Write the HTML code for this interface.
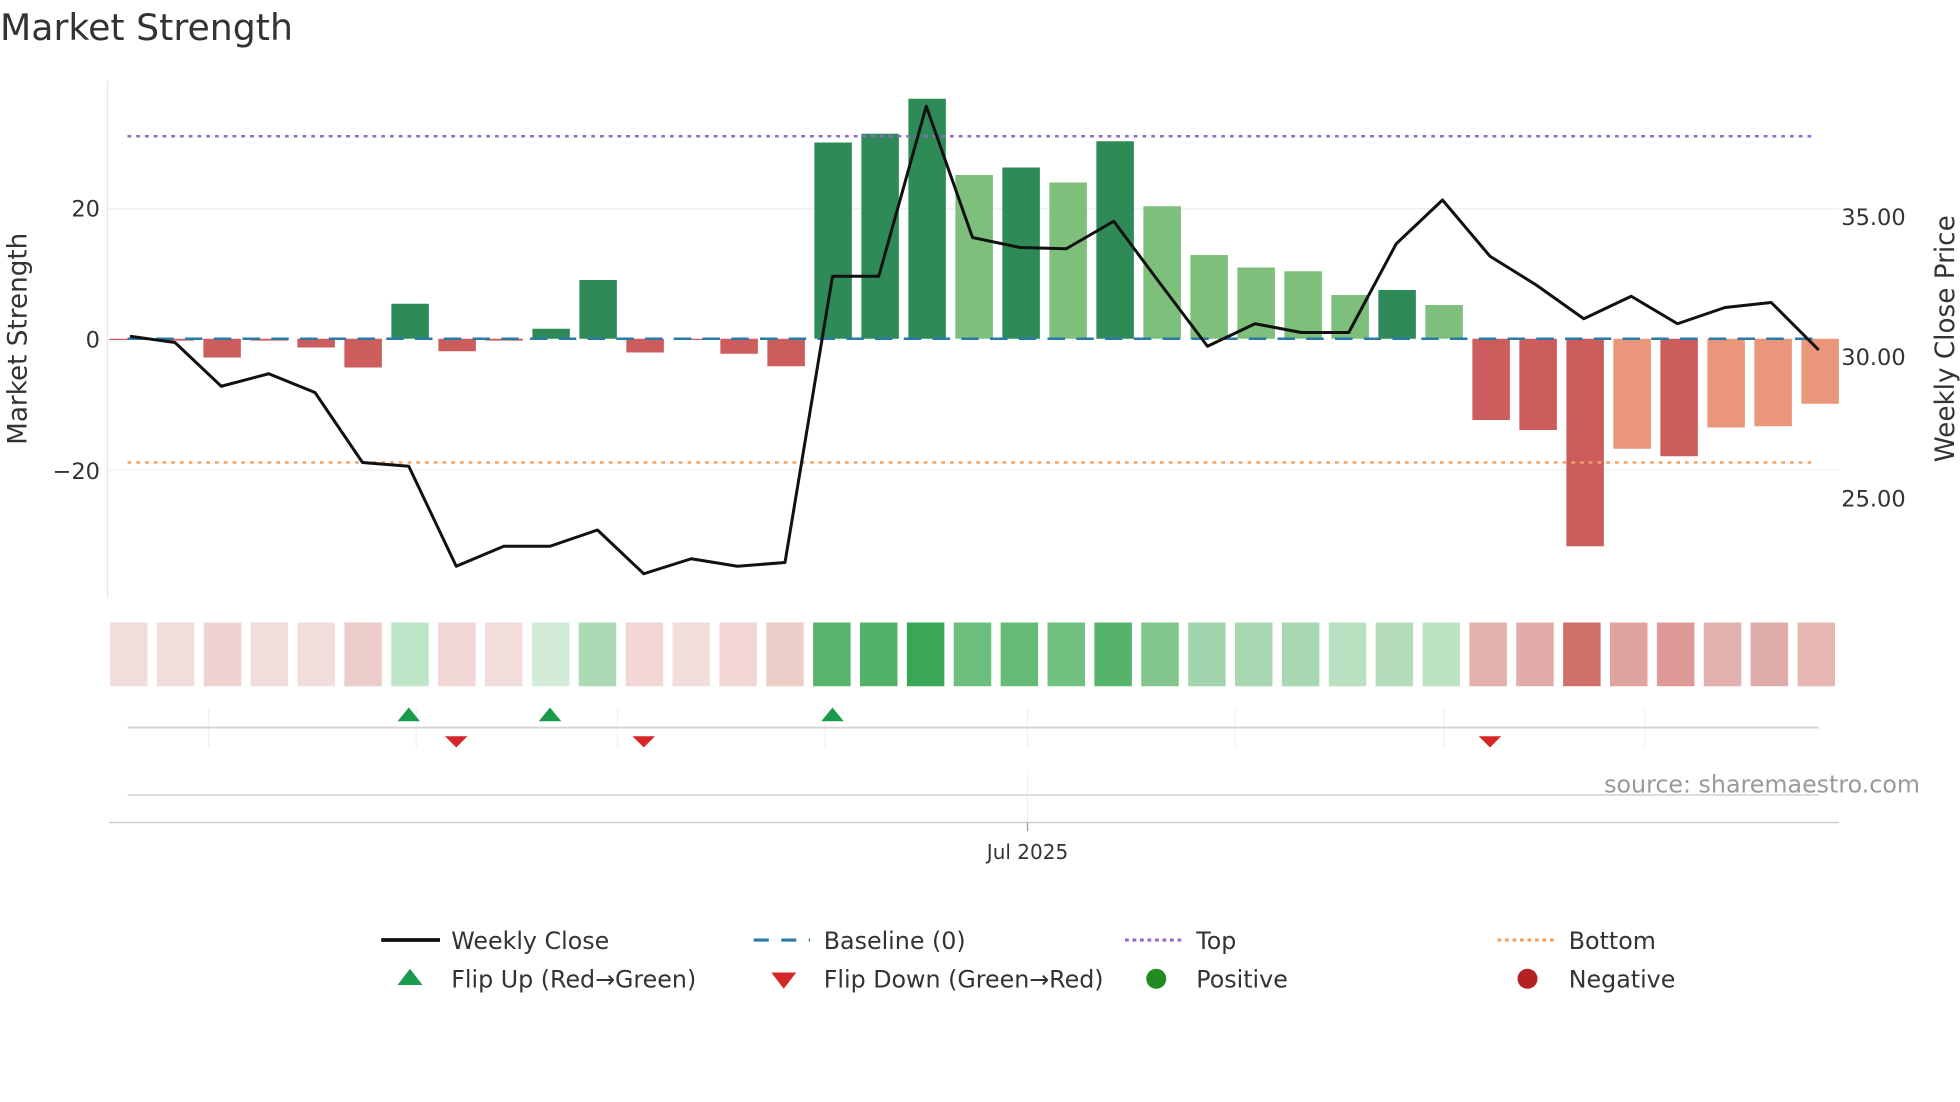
<!DOCTYPE html>
<html><head><meta charset="utf-8"><style>
html,body{margin:0;padding:0;background:#fff;}
svg{display:block;font-family:"DejaVu Sans","Liberation Sans",sans-serif;}
</style></head><body>
<svg width="1960" height="1102" viewBox="0 0 1568 881.6" xmlns="http://www.w3.org/2000/svg">
<rect width="1568" height="882" fill="#fff"/>
<text x="0" y="32" font-size="29" fill="#333">Market Strength</text>
<g stroke="#eceff2" stroke-width="1">
<line x1="86" y1="167" x2="1471" y2="167"/>
<line x1="86" y1="376" x2="1471" y2="376"/>
</g>
<line x1="86" y1="65" x2="86" y2="478" stroke="#e6e6e6"/>
<g font-size="18" fill="#333" text-anchor="end">
<text x="80" y="173">20</text><text x="80" y="278">0</text><text x="80" y="383">−20</text>
</g>
<g font-size="18" fill="#333">
<text x="1473" y="180">35.00</text><text x="1473" y="292">30.00</text><text x="1473" y="405">25.00</text>
</g>
<text transform="translate(21,271) rotate(-90)" font-size="21" fill="#333" text-anchor="middle">Market Strength</text>
<text transform="translate(1563,271) rotate(-90)" font-size="21" fill="#333" text-anchor="middle">Weekly Close Price</text>
<g>
<rect x="87.5" y="271" width="30" height="1" fill="#cd5c5c"/>
<rect x="125.1" y="271" width="30" height="1.5" fill="#cd5c5c"/>
<rect x="162.7" y="271" width="30" height="15" fill="#cd5c5c"/>
<rect x="200.3" y="271" width="30" height="1.5" fill="#cd5c5c"/>
<rect x="237.9" y="271" width="30" height="7" fill="#cd5c5c"/>
<rect x="275.5" y="271" width="30" height="23" fill="#cd5c5c"/>
<rect x="313.1" y="243" width="30" height="28" fill="#2e8b57"/>
<rect x="350.7" y="271" width="30" height="10" fill="#cd5c5c"/>
<rect x="388.3" y="271" width="30" height="1.5" fill="#cd5c5c"/>
<rect x="425.9" y="263" width="30" height="8" fill="#2e8b57"/>
<rect x="463.5" y="224" width="30" height="47" fill="#2e8b57"/>
<rect x="501.1" y="271" width="30" height="11" fill="#cd5c5c"/>
<rect x="538.7" y="271" width="30" height="1" fill="#cd5c5c"/>
<rect x="576.3" y="271" width="30" height="12" fill="#cd5c5c"/>
<rect x="613.9" y="271" width="30" height="22" fill="#cd5c5c"/>
<rect x="651.5" y="114" width="30" height="157" fill="#2e8b57"/>
<rect x="689.1" y="107" width="30" height="164" fill="#2e8b57"/>
<rect x="726.7" y="79" width="30" height="192" fill="#2e8b57"/>
<rect x="764.3" y="140" width="30" height="131" fill="#7dbf7b"/>
<rect x="801.9" y="134" width="30" height="137" fill="#2e8b57"/>
<rect x="839.5" y="146" width="30" height="125" fill="#7dbf7b"/>
<rect x="877.1" y="113" width="30" height="158" fill="#2e8b57"/>
<rect x="914.7" y="165" width="30" height="106" fill="#7dbf7b"/>
<rect x="952.3" y="204" width="30" height="67" fill="#7dbf7b"/>
<rect x="989.9" y="214" width="30" height="57" fill="#7dbf7b"/>
<rect x="1027.5" y="217" width="30" height="54" fill="#7dbf7b"/>
<rect x="1065.1" y="236" width="30" height="35" fill="#7dbf7b"/>
<rect x="1102.7" y="232" width="30" height="39" fill="#2e8b57"/>
<rect x="1140.3" y="244" width="30" height="27" fill="#7dbf7b"/>
<rect x="1177.9" y="271" width="30" height="65" fill="#cd5c5c"/>
<rect x="1215.5" y="271" width="30" height="73" fill="#cd5c5c"/>
<rect x="1253.1" y="271" width="30" height="166" fill="#cd5c5c"/>
<rect x="1290.7" y="271" width="30" height="88" fill="#e9967a"/>
<rect x="1328.3" y="271" width="30" height="94" fill="#cd5c5c"/>
<rect x="1365.9" y="271" width="30" height="71" fill="#e9967a"/>
<rect x="1403.5" y="271" width="30" height="70" fill="#e9967a"/>
<rect x="1441.1" y="271" width="30" height="52" fill="#e9967a"/>
</g>
<line x1="102" y1="271" x2="1455" y2="271" stroke="#2a7aa8" stroke-width="2" stroke-dasharray="14,9"/>
<line x1="102" y1="109" x2="1452" y2="109" stroke="#9467d0" stroke-width="2" stroke-dasharray="3,4"/>
<line x1="102" y1="370" x2="1452" y2="370" stroke="#f4a261" stroke-width="2" stroke-dasharray="3,4"/>
<polyline fill="none" stroke="#111" stroke-width="2.4" stroke-linejoin="round" points="104,269 140,274 177,309 215,299 252,314 290,370 327,373 365,453 403,437 440,437 478,424 515,459 553,447 590,453 628,450 666,221 703,221 741,85 778,190 816,198 853,199 891,177 929,228 966,277 1004,259 1041,266 1079,266 1117,195 1154,160 1192,205 1229,228 1267,255 1305,237 1342,259 1380,246 1417,242 1455,280"/>
<g>
<rect x="88" y="498" width="30" height="51" fill="#f2dcdc"/>
<rect x="125.5" y="498" width="30" height="51" fill="#f2dcdc"/>
<rect x="163" y="498" width="30" height="51" fill="#efd3d2"/>
<rect x="200.5" y="498" width="30" height="51" fill="#f2dcdc"/>
<rect x="238" y="498" width="30" height="51" fill="#f2dcdc"/>
<rect x="275.5" y="498" width="30" height="51" fill="#ecccc9"/>
<rect x="313" y="498" width="30" height="51" fill="#bde5c8"/>
<rect x="350.5" y="498" width="30" height="51" fill="#f0d6d5"/>
<rect x="388" y="498" width="30" height="51" fill="#f2dcdc"/>
<rect x="425.5" y="498" width="30" height="51" fill="#d3ecd9"/>
<rect x="463" y="498" width="30" height="51" fill="#acdab4"/>
<rect x="500.5" y="498" width="30" height="51" fill="#f2d6d5"/>
<rect x="538" y="498" width="30" height="51" fill="#f2dcdc"/>
<rect x="575.5" y="498" width="30" height="51" fill="#f2d6d5"/>
<rect x="613" y="498" width="30" height="51" fill="#edcdc8"/>
<rect x="650.5" y="498" width="30" height="51" fill="#58b46a"/>
<rect x="688" y="498" width="30" height="51" fill="#52b267"/>
<rect x="725.5" y="498" width="30" height="51" fill="#3aa757"/>
<rect x="763" y="498" width="30" height="51" fill="#6cbe7c"/>
<rect x="800.5" y="498" width="30" height="51" fill="#64bb76"/>
<rect x="838" y="498" width="30" height="51" fill="#70c080"/>
<rect x="875.5" y="498" width="30" height="51" fill="#56b36a"/>
<rect x="913" y="498" width="30" height="51" fill="#82c68e"/>
<rect x="950.5" y="498" width="30" height="51" fill="#a2d5ad"/>
<rect x="988" y="498" width="30" height="51" fill="#a8d8b2"/>
<rect x="1025.5" y="498" width="30" height="51" fill="#a8d8b2"/>
<rect x="1063" y="498" width="30" height="51" fill="#b8e0c1"/>
<rect x="1100.5" y="498" width="30" height="51" fill="#b4deb9"/>
<rect x="1138" y="498" width="30" height="51" fill="#bde3c5"/>
<rect x="1175.5" y="498" width="30" height="51" fill="#e3b0ad"/>
<rect x="1213" y="498" width="30" height="51" fill="#e2aca8"/>
<rect x="1250.5" y="498" width="30" height="51" fill="#cd716a"/>
<rect x="1288" y="498" width="30" height="51" fill="#e0a49f"/>
<rect x="1325.5" y="498" width="30" height="51" fill="#dd9a96"/>
<rect x="1363" y="498" width="30" height="51" fill="#e2b0ae"/>
<rect x="1400.5" y="498" width="30" height="51" fill="#e0acaa"/>
<rect x="1438" y="498" width="30" height="51" fill="#e6b7b3"/>
</g>
<g stroke="#eef0f2" stroke-width="1">
<line x1="167" y1="567" x2="167" y2="598"/><line x1="333" y1="567" x2="333" y2="598"/>
<line x1="494" y1="567" x2="494" y2="598"/><line x1="660" y1="567" x2="660" y2="598"/>
<line x1="822" y1="567" x2="822" y2="598"/><line x1="988" y1="567" x2="988" y2="598"/>
<line x1="1155" y1="567" x2="1155" y2="598"/><line x1="1316" y1="567" x2="1316" y2="598"/>
<line x1="822" y1="616" x2="822" y2="660"/>
</g>
<line x1="102" y1="582" x2="1455" y2="582" stroke="#d4d4d4" stroke-width="1.5"/>
<g fill="#1a9a4a">
<polygon points="327,566 318,577 336,577"/><polygon points="440,566 431,577 449,577"/><polygon points="666,566 657,577 675,577"/>
</g>
<g fill="#d62728">
<polygon points="356,589 374,589 365,598"/><polygon points="506,589 524,589 515,598"/><polygon points="1183,589 1201,589 1192,598"/>
</g>
<line x1="102" y1="636" x2="1455" y2="636" stroke="#d4d4d4" stroke-width="1.2"/>
<line x1="87" y1="658" x2="1471" y2="658" stroke="#cfcfcf" stroke-width="1.2"/>
<line x1="822" y1="658" x2="822" y2="665" stroke="#999"/>
<text x="822" y="687" font-size="16" fill="#333" text-anchor="middle">Jul 2025</text>
<text x="1536" y="634" font-size="19" fill="#999" text-anchor="end">source: sharemaestro.com</text>
<g font-size="19" fill="#333">
<line x1="305" y1="752" x2="352" y2="752" stroke="#111" stroke-width="3"/>
<text x="361" y="759">Weekly Close</text>
<line x1="603" y1="752" x2="648" y2="752" stroke="#2a7aa8" stroke-width="2.5" stroke-dasharray="12,10"/>
<text x="659" y="759">Baseline (0)</text>
<line x1="900" y1="752" x2="945" y2="752" stroke="#9467d0" stroke-width="2.5" stroke-dasharray="3,3"/>
<text x="957" y="759">Top</text>
<line x1="1198" y1="752" x2="1243" y2="752" stroke="#f4a261" stroke-width="2.5" stroke-dasharray="3,3"/>
<text x="1255" y="759">Bottom</text>
<polygon points="328,775 318,788 338,788" fill="#1a9a4a"/>
<text x="361" y="790">Flip Up (Red→Green)</text>
<polygon points="617,778 637,778 627,791" fill="#d62728"/>
<text x="659" y="790">Flip Down (Green→Red)</text>
<circle cx="925" cy="783" r="8" fill="#228b22"/>
<text x="957" y="790">Positive</text>
<circle cx="1222" cy="783" r="8" fill="#b22222"/>
<text x="1255" y="790">Negative</text>
</g>
</svg>
</body></html>
